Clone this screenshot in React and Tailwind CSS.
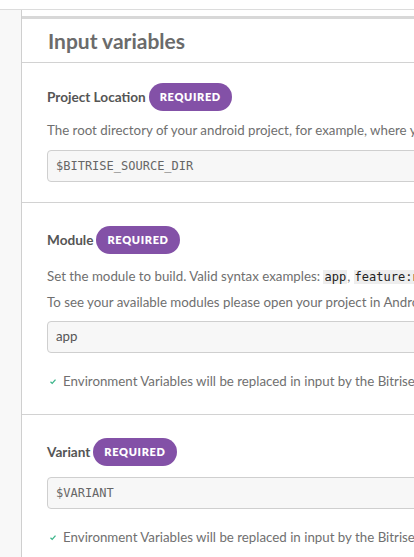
import React from 'react';

const font = { fontFamily: 'Lato, "Open Sans", sans-serif' };
const mono = { fontFamily: '"DejaVu Sans Mono", monospace' };

function Badge() {
  return (
    <span className="ml-[3px] inline-flex h-[28px] items-center rounded-full bg-[#8351a7] px-[11px] text-[11px] font-extrabold tracking-[0.06em] text-white">
      REQUIRED
    </span>
  );
}

function Label({ children }) {
  return (
    <div className="flex items-center">
      <span className="text-[13.6px] font-bold text-[#555]">{children}</span>
      <Badge />
    </div>
  );
}

function InputBox({ value, isMono }) {
  return (
    <div className="mr-[-20px] flex h-[32px] items-center rounded-[4px] border border-[#cfcfcf] bg-[#f7f7f7] px-[8px]">
      <span
        className={isMono ? 'text-[12px] text-[#666]' : 'text-[13.3px] text-[#555]'}
        style={isMono ? mono : undefined}
      >
        {value}
      </span>
    </div>
  );
}

function EnvNote() {
  return (
    <div className="flex items-center whitespace-nowrap pl-[2px] text-[13.3px] text-[#707070]">
      <svg width="8" height="7" viewBox="0 0 8 7" className="mr-[6px] h-[7px] w-[8px] shrink-0">
        <path d="M1.5 3.8 L3.2 5.4 L6.5 1.6" fill="none" stroke="#3bb58a" strokeWidth="1.3" />
      </svg>
      <span>Environment Variables will be replaced in input by the Bitrise CLI</span>
    </div>
  );
}

export default function App() {
  return (
    <div className="h-[557px] w-[414px] overflow-hidden bg-white" style={font}>
      <div className="h-[9px]" />
      <div className="flex h-[548px] border-t border-[#dcdcdc]">
        <div className="w-[21px] shrink-0 bg-[#f8f8f8]" />
        <div className="min-w-0 flex-1 overflow-hidden border-l border-[#cfcfcf]">
          <div className="mt-[6px] h-[3px] bg-[#d8d8d8]" />
          <div className="flex h-[44px] items-center border-b border-[#d2d2d2] pl-[26px]">
            <h2 className="text-[21px] font-bold text-[#6b6b6b]">Input variables</h2>
          </div>

          <div className="border-b border-[#d2d2d2] pb-[20px] pl-[25px] pt-[20px]">
            <Label>Project Location</Label>
            <p className="mt-[10px] whitespace-nowrap text-[13.3px] text-[#6f6f6f]">
              The root directory of your android project, for example, where your root build gradle file exist
            </p>
            <div className="mt-[9px]">
              <InputBox value="$BITRISE_SOURCE_DIR" isMono />
            </div>
          </div>

          <div className="border-b border-[#d2d2d2] pb-[22px] pl-[25px] pt-[23px]">
            <Label>Module</Label>
            <p className="mt-[13px] whitespace-nowrap text-[13.3px] text-[#6f6f6f]">
              Set the module to build. Valid syntax examples:{' '}
              <code className="bg-[#eeeeee] px-[1px] text-[12px] text-[#222]" style={mono}>app</code>,{' '}
              <code className="bg-[#eeeeee] px-[1px] text-[12px] text-[#222]" style={mono}>feature:nav</code>
            </p>
            <p className="mt-[6px] whitespace-nowrap text-[13.3px] text-[#6f6f6f]">
              To see your available modules please open your project in Android Studio
            </p>
            <div className="mt-[8px]">
              <InputBox value="app" />
            </div>
            <div className="mt-[19px]">
              <EnvNote />
            </div>
          </div>

          <div className="pl-[25px] pt-[23px]">
            <Label>Variant</Label>
            <div className="mt-[11px]">
              <InputBox value="$VARIANT" isMono />
            </div>
            <div className="mt-[19px]">
              <EnvNote />
            </div>
          </div>
        </div>
      </div>
    </div>
  );
}
